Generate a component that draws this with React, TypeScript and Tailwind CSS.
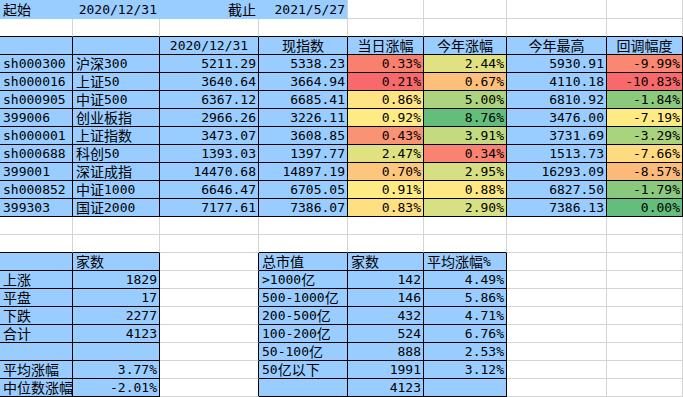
import React from "react";

type Cell = { t?: string; a?: "l" | "r" | "c"; bg?: string; box?: boolean; top?: boolean };

const BLUE = "bg-[#99CCFF]";

const indexRows: [string, string, string, string, string, string, string, string, string, string, string][] = [
  ["sh000300", "沪深300", "5211.29", "5338.23", "0.33%", "bg-[#F9806F]", "2.44%", "bg-[#E0E282]", "5930.91", "-9.99%", "bg-[#FA8771]"],
  ["sh000016", "上证50", "3640.64", "3664.94", "0.21%", "bg-[#F8696B]", "0.67%", "bg-[#FDC07C]", "4110.18", "-10.83%", "bg-[#F8696B]"],
  ["sh000905", "中证500", "6367.12", "6685.41", "0.86%", "bg-[#FFE483]", "5.00%", "bg-[#AED37F]", "6810.92", "-1.84%", "bg-[#8BC97D]"],
  ["399006", "创业板指", "2966.26", "3226.11", "0.92%", "bg-[#FFEB84]", "8.76%", "bg-[#63BE7B]", "3476.00", "-7.19%", "bg-[#FFEB84]"],
  ["sh000001", "上证指数", "3473.07", "3608.85", "0.43%", "bg-[#FA9373]", "3.91%", "bg-[#C3DA81]", "3731.69", "-3.29%", "bg-[#AAD37F]"],
  ["sh000688", "科创50", "1393.03", "1397.77", "2.47%", "bg-[#E0E282]", "0.34%", "bg-[#F98270]", "1513.73", "-7.66%", "bg-[#FEDA81]"],
  ["399001", "深证成指", "14470.68", "14897.19", "0.70%", "bg-[#FDC67D]", "2.95%", "bg-[#D6DF82]", "16293.09", "-8.57%", "bg-[#FCBA7A]"],
  ["sh000852", "中证1000", "6646.47", "6705.05", "0.91%", "bg-[#FFEB84]", "0.88%", "bg-[#FFE883]", "6827.50", "-1.79%", "bg-[#8AC97D]"],
  ["399303", "国证2000", "7177.61", "7386.07", "0.83%", "bg-[#FEDF82]", "2.90%", "bg-[#D7E082]", "7386.13", "0.00%", "bg-[#63BE7B]"],
];

const leftTable: [string, string][] = [
  ["", "家数"],
  ["上涨", "1829"],
  ["平盘", "17"],
  ["下跌", "2277"],
  ["合计", "4123"],
  ["", ""],
  ["平均涨幅", "3.77%"],
  ["中位数涨幅", "-2.01%"],
];

const rightTable: [string, string, string][] = [
  ["总市值", "家数", "平均涨幅%"],
  [">1000亿", "142", "4.49%"],
  ["500-1000亿", "146", "5.86%"],
  ["200-500亿", "432", "4.71%"],
  ["100-200亿", "524", "6.76%"],
  ["50-100亿", "888", "2.53%"],
  ["50亿以下", "1991", "3.12%"],
  ["", "4123", ""],
];

const empty = (): Cell[] => Array.from({ length: 8 }, () => ({}));

function buildSheet(): Cell[][] {
  const rows: Cell[][] = [];

  // row 1: start / end dates
  rows.push([
    { t: "起始", a: "l", bg: BLUE, top: true },
    { t: "2020/12/31", a: "r", bg: BLUE, top: true },
    { t: "截止", a: "r", bg: BLUE, top: true },
    { t: "2021/5/27", a: "r", bg: BLUE, top: true },
    {}, {}, {}, {},
  ]);
  rows.push(empty());

  // header
  const head = ["", "", "2020/12/31", "现指数", "当日涨幅", "今年涨幅", "今年最高", "回调幅度"];
  rows.push(head.map((t) => ({ t, a: "c", bg: BLUE, box: true })));

  indexRows.forEach((r) => {
    rows.push([
      { t: r[0], a: "l", bg: BLUE, box: true },
      { t: r[1], a: "l", bg: BLUE, box: true },
      { t: r[2], a: "r", bg: BLUE, box: true },
      { t: r[3], a: "r", bg: BLUE, box: true },
      { t: r[4], a: "r", bg: r[5], box: true },
      { t: r[6], a: "r", bg: r[7], box: true },
      { t: r[8], a: "r", bg: BLUE, box: true },
      { t: r[9], a: "r", bg: r[10], box: true },
    ]);
  });

  rows.push(empty());
  rows.push(empty());

  for (let i = 0; i < 8; i++) {
    const l = leftTable[i];
    const r = rightTable[i];
    rows.push([
      { t: l[0], a: "l", bg: BLUE, box: true },
      { t: l[1], a: i === 0 ? "l" : "r", bg: BLUE, box: true },
      {},
      { t: r[0], a: "l", bg: BLUE, box: true },
      { t: r[1], a: i === 0 ? "l" : "r", bg: BLUE, box: true },
      { t: r[2], a: i === 0 ? "l" : "r", bg: BLUE, box: true },
      {},
      {},
    ]);
  }
  return rows;
}

// Chinese runs are set a touch larger than the half-width digits
function CellText({ text }: { text: string }) {
  const parts = text.split(/([\u4e00-\u9fff]+)/).filter(Boolean);
  return (
    <>
      {parts.map((p, i) =>
        /[\u4e00-\u9fff]/.test(p) ? (
          <span key={i} className="text-[14px]">
            {p}
          </span>
        ) : (
          <span key={i}>{p}</span>
        )
      )}
    </>
  );
}

export default function App() {
  const sheet = buildSheet();

  return (
    <div className="w-[683px] h-[397px] overflow-hidden bg-white text-black font-['DejaVu_Sans_Mono','Noto_Sans_CJK_SC',monospace] text-[13px]">
      <div className="grid grid-cols-[73px_87px_99px_89px_76px_83px_100px_76px] grid-rows-[19px_repeat(21,18px)]">
        {sheet.map((row, r) =>
          row.map((cell, c) => {
            const right = row[c + 1];
            const below = sheet[r + 1]?.[c];
            const rBlack = cell.box || right?.box;
            const bBlack = cell.box || below?.box;
            const rBorder = rBlack
              ? "border-r-black"
              : cell.top && right?.top
              ? "border-r-[#99CCFF]"
              : "border-r-[#D4D4D4]";
            const bBorder = bBlack ? "border-b-black" : cell.top ? "border-b-[#99CCFF]" : "border-b-[#D4D4D4]";
            const align =
              cell.a === "r" ? "justify-end pr-[2px]" : cell.a === "c" ? "justify-center" : "justify-start pl-[3px]";
            return (
              <div
                key={`${r}-${c}`}
                className={`flex items-end overflow-hidden whitespace-nowrap border-r border-b leading-[16px] ${rBorder} ${bBorder} ${align} ${cell.bg ?? "bg-white"}`}
              >
                {cell.t ? <CellText text={cell.t} /> : null}
              </div>
            );
          })
        )}
      </div>
    </div>
  );
}
